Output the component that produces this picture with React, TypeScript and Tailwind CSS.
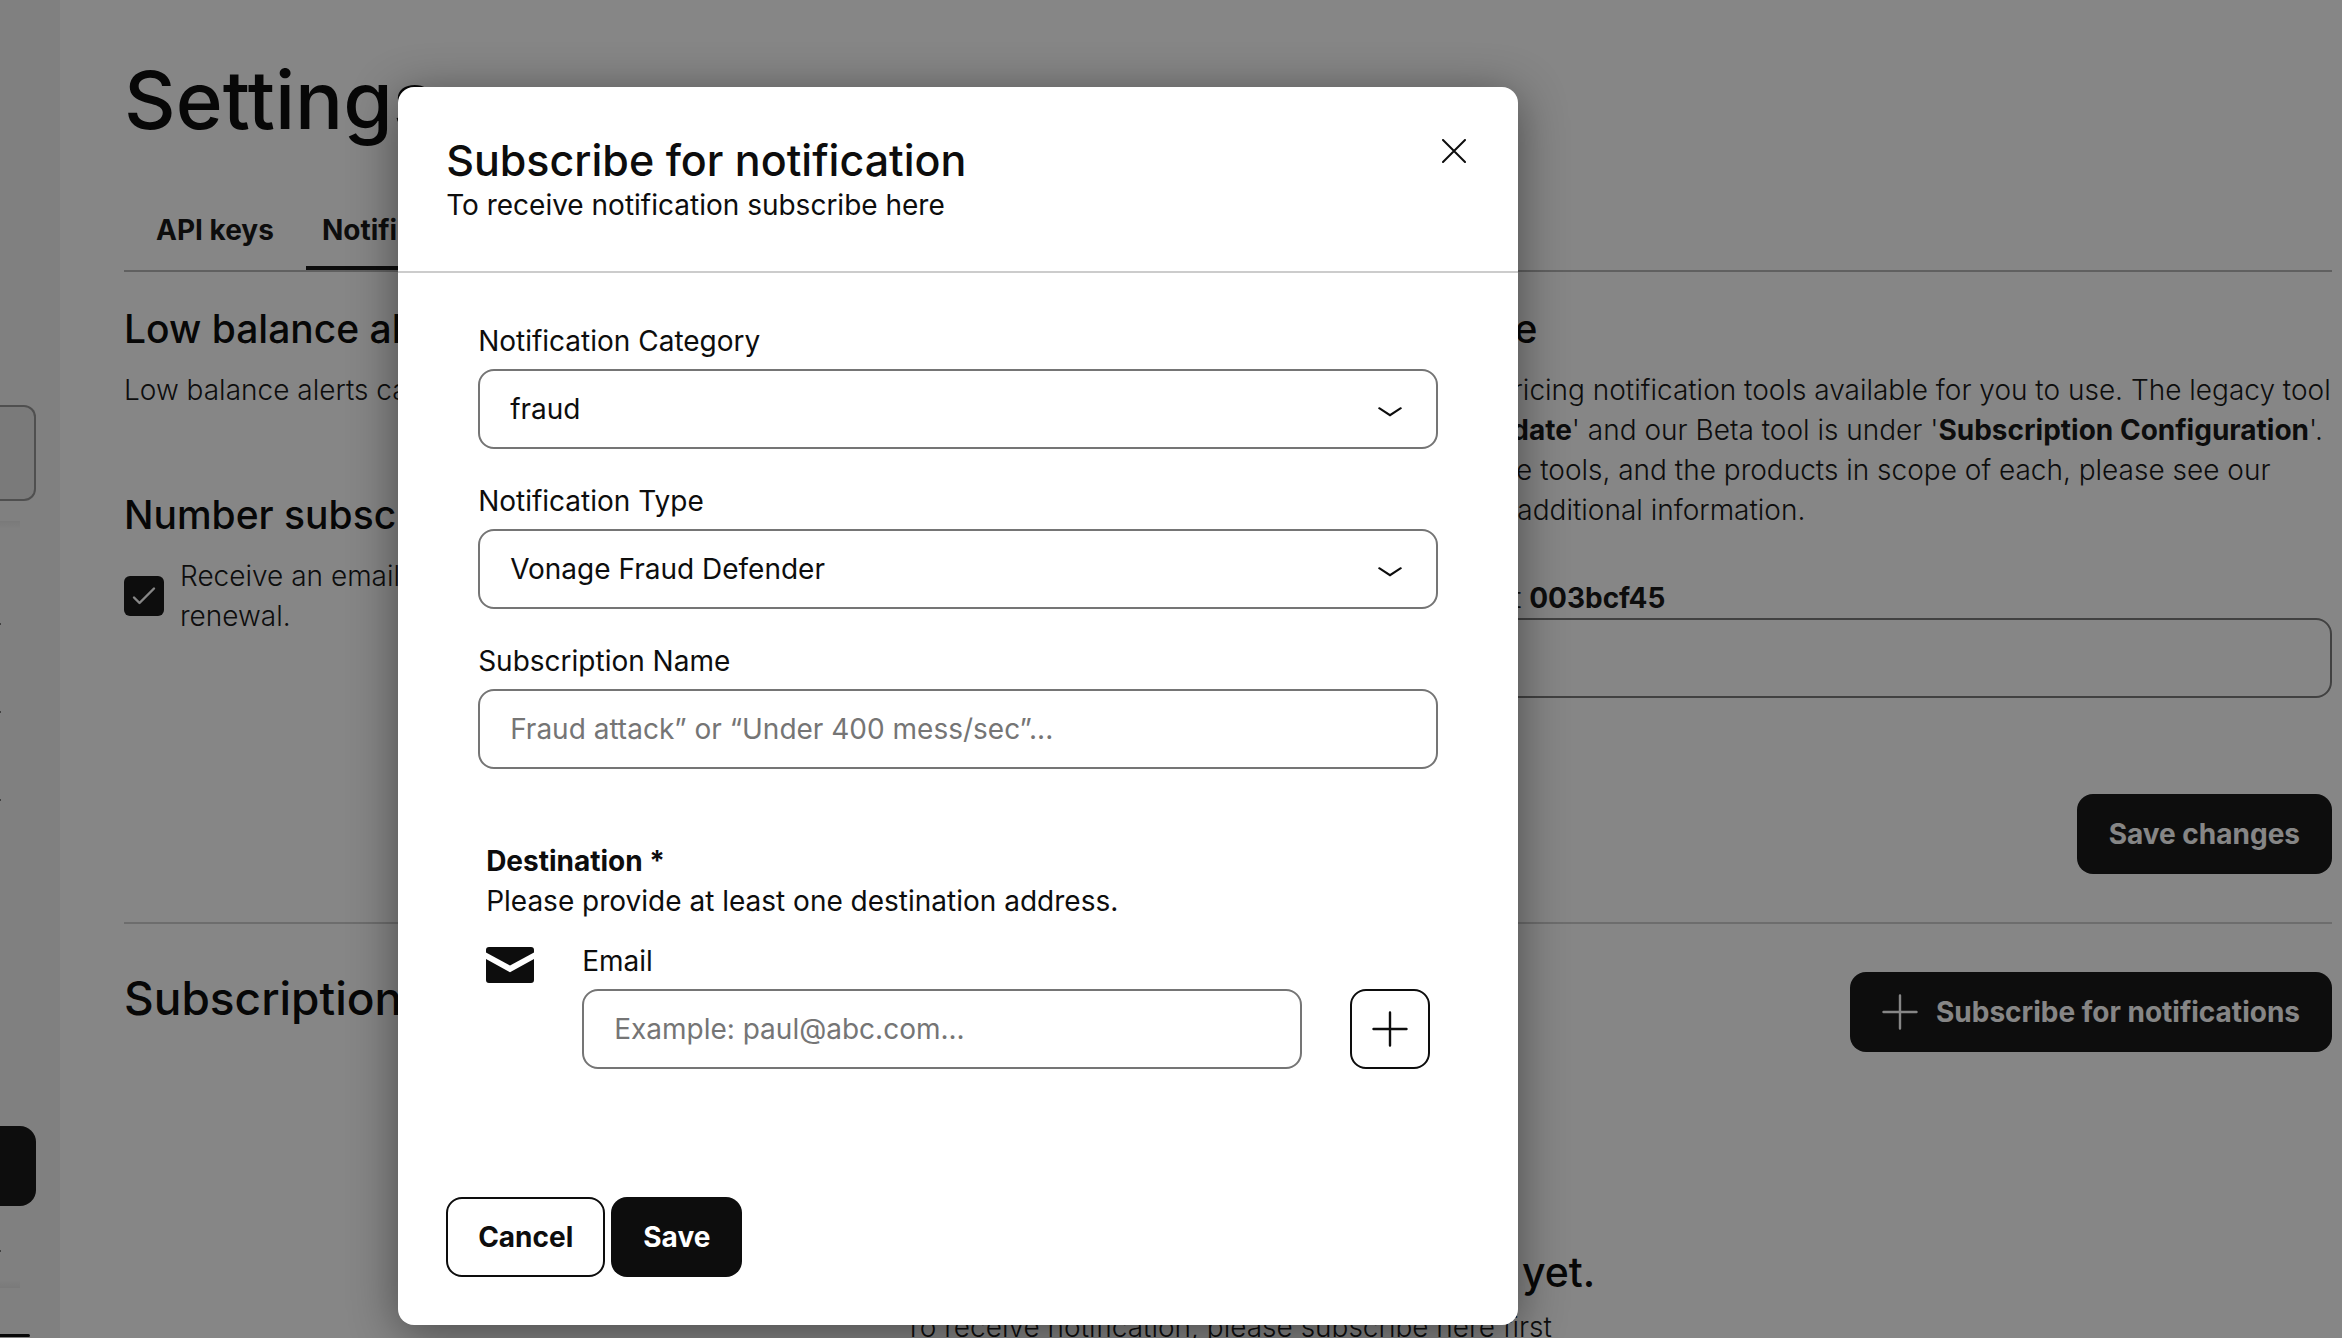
import type { ReactNode } from 'react'

const inputBase =
  'h-20 w-full appearance-none rounded-2xl border-2 border-[#757575] bg-transparent px-[30px] placeholder:text-[#757575] focus:outline-none'

const tabs = [
  { label: 'API keys', active: false },
  { label: 'Notifications', active: true },
]

function PlusIcon() {
  return (
    <svg viewBox="0 0 36 36" className="size-9" fill="none" stroke="currentColor" strokeWidth="2.4" strokeLinecap="round" aria-hidden="true">
      <path d="M18 1.5v33M1.5 18h33" />
    </svg>
  )
}

function ChevronIcon() {
  return (
    <svg
      viewBox="0 0 24 10"
      className="pointer-events-none absolute top-[38px] right-9 h-[10px] w-6"
      fill="none"
      stroke="currentColor"
      strokeWidth="2"
      strokeLinecap="round"
      aria-hidden="true"
    >
      <path d="M1.2 1.2 12 8.2 22.8 1.2" />
    </svg>
  )
}

function SelectField({ id, label, value }: { id: string; label: string; value: string }) {
  return (
    <div className="flex flex-col gap-2">
      <label htmlFor={id}>{label}</label>
      <div className="relative">
        <select id={id} className={inputBase} defaultValue={value}>
          <option value={value}>{value}</option>
        </select>
        <ChevronIcon />
      </div>
    </div>
  )
}

function SectionTitle({ children }: { children: ReactNode }) {
  return <h2 className="text-[39px] leading-[48px] font-medium text-black">{children}</h2>
}

function Sidebar() {
  return (
    <aside className="flex w-[60px] shrink-0 flex-col bg-[#f3f3f3] pt-[405px]">
      <div className="h-24 w-9 rounded-r-xl border-2 border-l-0 border-[#919191] bg-[#e7e7e7]" />
      <div className="mt-5 h-2 w-5 bg-linear-to-b from-[#e6e6e6] to-[#f3f3f3]" />
      <div className="mt-[94px] flex flex-col gap-[86px]">
        <div className="h-[2px] w-px bg-[#757575]" />
        <div className="h-[2px] w-px bg-[#757575]" />
        <div className="h-[2px] w-px bg-[#757575]" />
      </div>
      <div className="mt-[325px] h-20 w-9 rounded-r-2xl bg-[#0d0d0d]" />
      <div className="mt-11 h-[2px] w-px bg-[#757575]" />
      <div className="mt-[28px] h-2 w-5 bg-linear-to-b from-[#f3f3f3] to-[#e6e6e6]" />
      <div className="mt-[46px] h-[3px] w-[30px] shrink-0 rounded-r bg-black" />
    </aside>
  )
}

function SettingsPage() {
  return (
    <main className="flex min-w-0 grow flex-col pr-[10px] pl-16">
      <h1 className="mt-[50px] text-[80px] leading-[100px] font-medium text-black">Settings</h1>

      <nav className="mt-11 flex border-b-2 border-[#b3b3b3]">
        {tabs.map((tab) => (
          <button
            key={tab.label}
            type="button"
            className={
              tab.active
                ? 'h-[76px] border-b-4 border-[#0d0d0d] px-4 font-bold'
                : 'mr-4 ml-4 h-[76px] border-b-4 border-transparent px-4 font-bold'
            }
          >
            {tab.label}
          </button>
        ))}
      </nav>

      <div className="mt-[33px] grid grid-cols-2 gap-12">
        <section>
          <SectionTitle>Low balance alerts</SectionTitle>
          <p className="mt-[17px] font-light">Low balance alerts can be set below.</p>
          <div className="mt-[81px]">
            <SectionTitle>Number subscriptions</SectionTitle>
          </div>
          <label className="mt-[17px] flex items-center gap-4">
            <span className="relative size-10 shrink-0">
              <input type="checkbox" defaultChecked className="block size-10 appearance-none rounded-md bg-[#0d0d0d]" />
              <svg
                viewBox="0 0 24 20"
                className="pointer-events-none absolute top-[10px] left-2 h-5 w-6"
                fill="none"
                stroke="#fff"
                strokeWidth="2.4"
                strokeLinecap="round"
                strokeLinejoin="round"
                aria-hidden="true"
              >
                <path d="M2 11.5 7.5 17 22 2.5" />
              </svg>
            </span>
            <span className="font-light">
              Receive an email before each number
              <br />
              renewal.
            </span>
          </label>
        </section>

        <section className="whitespace-nowrap">
          <SectionTitle>Pricing Change</SectionTitle>
          <p className="mt-[17px] font-light">
            There are multiple pricing notification tools available for you to use. The legacy tool
            <br />
            is under '<b className="font-bold">Pricing update</b>' and our Beta tool is under '
            <b className="font-bold">Subscription Configuration</b>'.
            <br />
            For insights about the tools, and the products in scope of each, please see our
            <br />
            knowledge base for additional information.
          </p>
          <label htmlFor="pricing" className="mt-12 block font-light">
            Email list for account <b className="font-bold">003bcf45</b>
          </label>
          <input id="pricing" className={inputBase} />
          <div className="mt-24 flex justify-end">
            <button type="button" className="h-20 rounded-2xl bg-[#0d0d0d] px-8 font-bold text-white">
              Save changes
            </button>
          </div>
        </section>
      </div>

      <div className="mt-12 flex items-start justify-between border-t-2 border-[#cccccc] pt-12">
        <h2 className="text-[46px] leading-[52px] font-medium text-black">Subscriptions</h2>
        <button type="button" className="flex h-20 items-center gap-[18px] rounded-2xl bg-[#0d0d0d] px-8 font-bold text-white">
          <PlusIcon />
          Subscribe for notifications
        </button>
      </div>

      <div className="mt-[194px] text-center">
        <h3 className="text-[41px] leading-[52px] font-medium text-black">You don't have any subscriptions yet.</h3>
        <p className="mt-[9px] font-light">To receive notification, please subscribe here first</p>
      </div>
    </main>
  )
}

function SubscribeDialog() {
  return (
    <div
      role="dialog"
      aria-modal="true"
      aria-labelledby="dialog-title"
      className="w-[1120px] max-w-full rounded-2xl bg-white shadow-[0_8px_48px_rgba(0,0,0,0.45)]"
    >
      <header className="flex items-start justify-between border-b-2 border-[#cccccc] px-12 pt-12 pb-[46px]">
        <div>
          <h2 id="dialog-title" className="text-[43px] leading-[50px] font-medium">
            Subscribe for notification
          </h2>
          <p>To receive notification subscribe here</p>
        </div>
        <button type="button" aria-label="Close" className="flex size-8 items-center justify-center">
          <svg viewBox="0 0 24 24" className="size-6" fill="none" stroke="currentColor" strokeWidth="2" strokeLinecap="round" aria-hidden="true">
            <path d="M1 1l22 22M23 1 1 23" />
          </svg>
        </button>
      </header>

      <form id="subscribe-form" className="px-20 pt-12">
        <div className="flex flex-col gap-8">
          <SelectField id="category" label="Notification Category" value="fraud" />
          <SelectField id="type" label="Notification Type" value="Vonage Fraud Defender" />
          <div className="flex flex-col gap-2">
            <label htmlFor="name">Subscription Name</label>
            <input id="name" className={inputBase} placeholder="Fraud attack” or “Under 400 mess/sec”..." />
          </div>
        </div>

        <div className="mt-[72px] px-2">
          <h3 className="font-bold">Destination *</h3>
          <p>Please provide at least one destination address.</p>
          <div className="mt-5 flex gap-12">
            <svg viewBox="0 0 48 36" className="mt-[6px] h-9 w-12 shrink-0" fill="currentColor" aria-hidden="true">
              <path d="M0 5.5V3a3 3 0 0 1 3-3h42a3 3 0 0 1 3 3v2.5L24 18.5z" />
              <path d="M0 12v21a3 3 0 0 0 3 3h42a3 3 0 0 0 3-3V12L24 25.3z" />
            </svg>
            <div className="flex grow flex-col gap-2">
              <label htmlFor="email">Email</label>
              <input id="email" type="email" className={inputBase} placeholder="Example: paul@abc.com..." />
            </div>
            <button
              type="button"
              aria-label="Add email"
              className="flex size-20 shrink-0 items-center justify-center self-end rounded-2xl border-2 border-[#0d0d0d]"
            >
              <PlusIcon />
            </button>
          </div>
        </div>
      </form>

      <footer className="mt-32 flex gap-[6px] px-12 pb-12">
        <button type="button" className="h-20 rounded-2xl border-2 border-[#0d0d0d] px-[30px] font-bold">
          Cancel
        </button>
        <button type="submit" form="subscribe-form" className="h-20 rounded-2xl bg-[#0d0d0d] px-8 font-bold text-white">
          Save
        </button>
      </footer>
    </div>
  )
}

export default function App() {
  return (
    <div className="relative h-screen overflow-hidden bg-white font-['Inter',sans-serif] text-[28px] leading-10 text-[#0d0d0d]">
      <div className="flex h-full">
        <Sidebar />
        <SettingsPage />
      </div>
      <div className="absolute inset-0 flex items-start bg-[#0d0d0d]/50 pt-[87px] pl-[17%]">
        <SubscribeDialog />
      </div>
    </div>
  )
}
